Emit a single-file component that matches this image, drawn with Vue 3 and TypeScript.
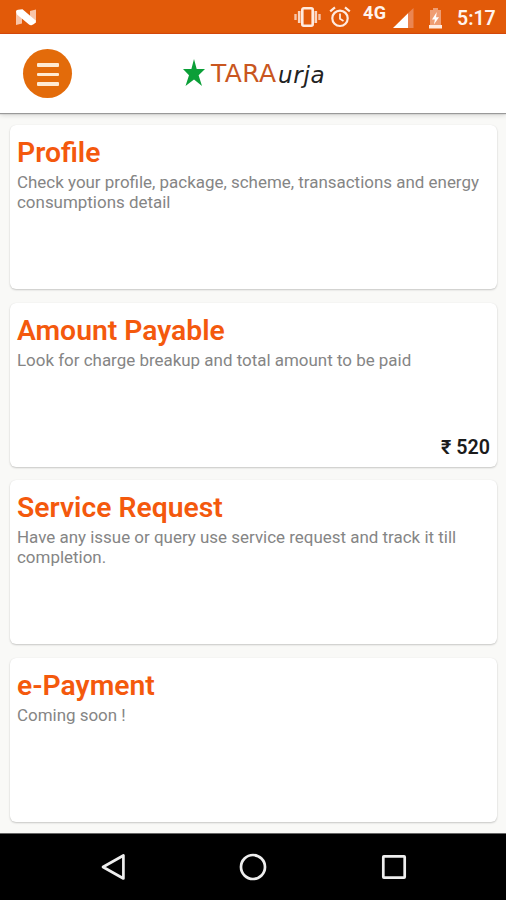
<script setup lang="ts">
interface Card {
  title: string
  text: string
  amount?: string
}

const cards: Card[] = [
  { title: 'Profile', text: 'Check your profile, package, scheme, transactions and energy consumptions detail' },
  { title: 'Amount Payable', text: 'Look for charge breakup and total amount to be paid', amount: '₹ 520' },
  { title: 'Service Request', text: 'Have any issue or query use service request and track it till completion.' },
  { title: 'e-Payment', text: 'Coming soon !' },
]
</script>

<template>
  <div class="screen">
    <div class="status">
      <svg class="nougat" width="20" height="17" viewBox="0 0 20 17">
        <path d="M0 2.5L6 4V14.500L0 16ZM20 .5V14L14 14V2Z" fill="#f8c4a8" />
        <path d="M0 2.500Q0 1 2 .7L6.500 .2L20 11.800Q19 15.500 15.500 16.200Q14 16.500 13 15.500L1 5.500Z" fill="#fff" />
      </svg>
      <div class="status-right">
        <svg width="27" height="22" viewBox="0 0 27 22">
          <rect x="8.3" y="2.3" width="10.4" height="17.4" rx="1.5" fill="none" stroke="#ffeadf" stroke-width="2.6" />
          <path d="M5.2 5V17M21.8 5V17" stroke="#fbd5c0" stroke-width="2.6" />
          <path d="M1.5 8V14M25.5 8V14" stroke="#f8c4a8" stroke-width="2.4" />
        </svg>
        <svg class="alarm" width="22" height="22" viewBox="0 0 22 22">
          <circle cx="11" cy="12.3" r="7.7" fill="none" stroke="#ffeadf" stroke-width="2.2" />
          <path d="M11 7.5V12.8L14.5 15" fill="none" stroke="#ffeadf" stroke-width="1.8" />
          <path d="M1.2 5.3L6 1.3M20.8 5.3L16 1.3" stroke="#ffeadf" stroke-width="2.2" />
        </svg>
        <span class="network">4G</span>
        <svg class="signal" width="21" height="20" viewBox="0 0 21 20">
          <path d="M15 5.300L20.500 0V20H15Z" fill="#ea8552" />
          <path d="M0 20L15 5.300V20Z" fill="#fff" />
        </svg>
        <svg class="battery" width="13" height="21" viewBox="0 0 13 21">
          <path d="M4 0H9V2H12V17H1V2H4Z" fill="#ef9d72" />
          <path d="M0 17H13V20.500H0Z" fill="#ffeadf" />
          <path d="M7.800 4L3 11.400H5.900L4.900 16.500L10 9.200H7Z" fill="#fff" />
        </svg>
        <span class="time">5:17</span>
      </div>
    </div>

    <header class="header">
      <button class="menu" aria-label="Menu">
        <span class="bar"></span>
        <span class="bar"></span>
        <span class="bar"></span>
      </button>
      <div class="brand">
        <svg class="star" width="22" height="28" viewBox="0 0 22 28">
          <path d="M11 0L13.700 10H22L15.600 16.300L19 27L11 20.600L2.500 27L6 16.300L0 10H8.400Z" fill="#0b9f38" />
        </svg>
        <span class="tara">TARA</span><span class="urja">urja</span>
      </div>
    </header>

    <main class="content">
      <section v-for="card in cards" :key="card.title" class="card">
        <h2 class="title">{{ card.title }}</h2>
        <p class="text">{{ card.text }}</p>
        <div v-if="card.amount" class="amount">{{ card.amount }}</div>
      </section>
    </main>

    <nav class="nav">
      <svg width="28" height="30" viewBox="0 0 28 30">
        <path d="M24.400 3.500V26.500L4 15Z" fill="none" stroke="#eee" stroke-width="2.700" stroke-linejoin="round" />
      </svg>
      <svg width="28" height="30" viewBox="0 0 28 30">
        <circle cx="14" cy="15" r="12" fill="none" stroke="#eee" stroke-width="2.700" />
      </svg>
      <svg width="28" height="30" viewBox="0 0 28 30">
        <rect x="3.300" y="4.300" width="21.400" height="21.400" rx=".6" fill="none" stroke="#eee" stroke-width="2.700" />
      </svg>
    </nav>
  </div>
</template>

<style>
body {
  margin: 0;
}
</style>

<style scoped>
.screen {
  box-sizing: border-box;
  display: flex;
  flex-direction: column;
  width: 506px;
  height: 900px;
  overflow: hidden;
  background: #f9f9f7;
  font-family: Roboto, "Noto Sans", sans-serif;
}
svg {
  display: block;
  flex: none;
}
.status {
  box-sizing: border-box;
  display: flex;
  justify-content: space-between;
  flex: none;
  height: 34px;
  padding: 0 10px 0 16px;
  background: #e25a09;
  border-bottom: 1px solid #d94a0b;
  color: #fff4ee;
}
.nougat {
  margin-top: 9px;
}
.status-right {
  display: flex;
  align-items: flex-start;
}
.status-right svg {
  margin-top: 6px;
}
.status-right .alarm {
  margin-left: 8px;
}
.network {
  width: 25px;
  margin: 3px 0 0 12px;
  font-size: 18px;
  line-height: 20px;
  font-weight: 700;
  letter-spacing: 0.4px;
}
.status-right .signal {
  margin: 8px 0 0 5px;
}
.status-right .battery {
  margin: 8px 0 0 15px;
}
.time {
  width: 39px;
  margin: 7px 0 0 15px;
  font-size: 19.500px;
  line-height: 23px;
  font-weight: 600;
  white-space: nowrap;
}
.header {
  box-sizing: border-box;
  position: relative;
  z-index: 1;
  display: flex;
  flex: none;
  height: 79px;
  padding: 15px 0 0 23px;
  background: #fff;
  box-shadow: 0 1px 1px #999, 0 2px 5px rgba(0, 0, 0, 0.16);
}
.menu {
  display: flex;
  flex-direction: column;
  align-items: center;
  justify-content: center;
  gap: 6px;
  width: 49px;
  height: 49px;
  padding: 2px 0 0;
  border: 0;
  border-radius: 50%;
  background: #e36b0a;
}
.bar {
  width: 22px;
  height: 3.500px;
  border-radius: 1px;
  background: #ffead2;
}
.brand {
  display: flex;
  align-items: flex-start;
  margin: 10px 0 0 111px;
  font-family: "DejaVu Sans", sans-serif;
  line-height: 30px;
}
.tara {
  width: 67px;
  margin-left: 6px;
  color: #c95620;
  font-size: 25px;
  letter-spacing: 0.400px;
}
.urja {
  margin-top: 1px;
  color: #222;
  font-size: 23px;
  font-style: oblique;
  letter-spacing: 0.700px;
}
.content {
  display: flex;
  flex-direction: column;
  gap: 13.670px;
  flex: 1;
  min-height: 0;
  padding: 12px 9px 0 10px;
}
.card {
  box-sizing: border-box;
  position: relative;
  flex: none;
  height: 164px;
  padding: 11px 7px 0;
  border-radius: 6px;
  background: #fff;
  box-shadow: 0 1px 2px rgba(0, 0, 0, 0.2), 0 0 1px rgba(0, 0, 0, 0.08);
}
.title {
  margin: 0;
  color: #f4590d;
  font-size: 28.300px;
  line-height: 33px;
  font-weight: 600;
}
.text {
  margin: 4px 0 0;
  color: #858585;
  font-size: 16.950px;
  line-height: 19.500px;
}
.amount {
  position: absolute;
  right: 7px;
  bottom: 7px;
  color: #1b1b1b;
  font-size: 19.700px;
  line-height: 24px;
  font-weight: 600;
}
.nav {
  box-sizing: border-box;
  display: flex;
  flex: none;
  justify-content: center;
  gap: 112.500px;
  height: 67px;
  padding-top: 18px;
  border-top: 1px solid #666;
  background: #000;
}
</style>
